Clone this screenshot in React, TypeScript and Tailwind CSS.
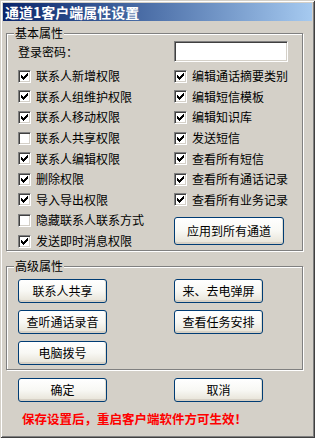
import React from 'react';

// classic 7x7 check mark, drawn pixel by pixel
const tick: [number, number, number][] = [
  [6, 0, 1],
  [5, 1, 2],
  [0, 2, 1],
  [4, 2, 3],
  [0, 3, 2],
  [3, 3, 3],
  [0, 4, 5],
  [1, 5, 3],
  [2, 6, 1],
];

function Check({ checked }: { checked: boolean }) {
  return (
    <span className="w-[13px] h-[13px] shrink-0 bg-white border border-t-[#808080] border-l-[#808080] border-r-white border-b-white shadow-[inset_1px_1px_0_#404040,inset_-1px_-1px_0_#d4d0c8] flex items-center justify-center">
      {checked && (
        <svg width="7" height="7" viewBox="0 0 7 7" shapeRendering="crispEdges">
          {tick.map(([x, y, w], i) => (
            <rect key={i} x={x} y={y} width={w} height={1} fill="#000" />
          ))}
        </svg>
      )}
    </span>
  );
}

function Row({ label, checked = true }: { label: string; checked?: boolean }) {
  return (
    <div className="h-[20.6px] flex items-center gap-[5px]">
      <Check checked={checked} />
      <span className="whitespace-nowrap">{label}</span>
    </div>
  );
}

function Button({ label, className = '' }: { label: string; className?: string }) {
  return (
    <button
      className={`rounded-[3px] border border-[#003c74] bg-gradient-to-b from-white via-[#f8f8f4] to-[#e6e2d6] shadow-[inset_0_-2px_0_#d6d0c5,inset_-1px_0_0_#e0dcd0] text-[12px] leading-none text-black flex items-center justify-center ${className}`}
    >
      {label}
    </button>
  );
}

function Group({ title, className = '', children }: { title: string; className?: string; children: React.ReactNode }) {
  return (
    <div className={`relative border border-[#808080] shadow-[inset_1px_1px_0_#fff,1px_1px_0_#fff] ${className}`}>
      <span className="absolute left-[7px] -top-[8px] px-[1px] bg-[#d4d0c8] leading-[14px]">{title}</span>
      {children}
    </div>
  );
}

export default function App() {
  return (
    <div className="w-[315px] h-[438px] bg-[#d4d0c8] p-[3px] shadow-[inset_1px_1px_0_#d4d0c8,inset_-1px_-1px_0_#404040,inset_2px_2px_0_#fff,inset_-2px_-2px_0_#808080] font-['Noto_Sans_CJK_SC',sans-serif] text-[12px] text-black overflow-hidden">
      {/* Title bar */}
      <div className="h-[18px] bg-gradient-to-r from-[#0a246a] to-[#a6caf0] flex items-center pl-[2px]">
        <span className="text-white font-bold text-[14px] leading-none">通道1客户端属性设置</span>
      </div>

      <div className="flex flex-col pl-[3px]">
        {/* Basic */}
        <Group title="基本属性" className="mt-[12px] w-[297px] h-[218px]">
          <div className="pt-[7px] pl-[11px]">
            <div className="flex items-center h-[21px]">
              <span className="w-[156px]">登录密码：</span>
              <input
                readOnly
                className="w-[114px] h-[21px] bg-white border border-t-[#808080] border-l-[#808080] border-r-white border-b-white shadow-[inset_1px_1px_0_#404040,inset_-1px_-1px_0_#d4d0c8] outline-none"
              />
            </div>
            <div className="flex mt-[4px]">
              <div className="w-[156px] flex flex-col">
                <Row label="联系人新增权限" />
                <Row label="联系人组维护权限" />
                <Row label="联系人移动权限" />
                <Row label="联系人共享权限" checked={false} />
                <Row label="联系人编辑权限" />
                <Row label="删除权限" />
                <Row label="导入导出权限" />
                <Row label="隐藏联系人联系方式" checked={false} />
                <Row label="发送即时消息权限" />
              </div>
              <div className="flex flex-col">
                <Row label="编辑通话摘要类别" />
                <Row label="编辑短信模板" />
                <Row label="编辑知识库" />
                <Row label="发送短信" />
                <Row label="查看所有短信" />
                <Row label="查看所有通话记录" />
                <Row label="查看所有业务记录" />
                <Button label="应用到所有通道" className="mt-[7px] w-[110px] h-[28px]" />
              </div>
            </div>
          </div>
        </Group>

        {/* Advanced */}
        <Group title="高级属性" className="mt-[15px] w-[297px] h-[104px]">
          <div className="pt-[12px] pl-[11px] grid grid-cols-[156px_auto] gap-y-[7px]">
            <Button label="联系人共享" className="w-[89px] h-[24px]" />
            <Button label="来、去电弹屏" className="w-[89px] h-[24px]" />
            <Button label="查听通话录音" className="w-[89px] h-[24px]" />
            <Button label="查看任务安排" className="w-[89px] h-[24px]" />
            <Button label="电脑拨号" className="w-[89px] h-[24px]" />
          </div>
        </Group>

        <div className="mt-[8px] pl-[12px] flex">
          <div className="w-[156px]">
            <Button label="确定" className="w-[89px] h-[24px]" />
          </div>
          <Button label="取消" className="w-[89px] h-[24px]" />
        </div>

        <div className="mt-[9px] pl-[16px] text-[#ff0000] font-bold text-[12.5px] leading-[16px] whitespace-nowrap">
          保存设置后，重启客户端软件方可生效！
        </div>
      </div>
    </div>
  );
}
